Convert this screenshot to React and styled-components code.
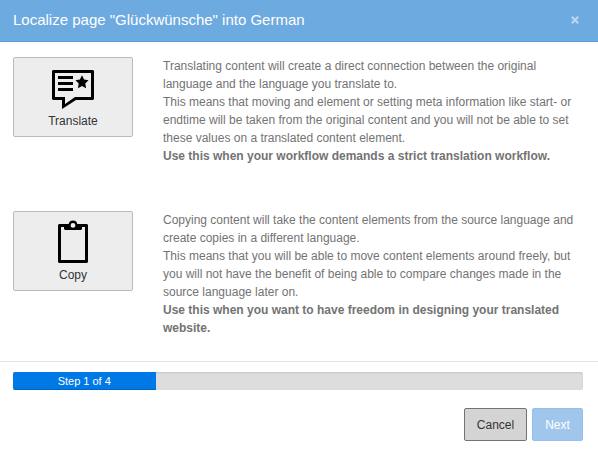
import React from "react";
import styled, { createGlobalStyle } from "styled-components";

const GlobalStyle = createGlobalStyle`
  *, *::before, *::after { box-sizing: border-box; }
  body {
    margin: 0;
    background: #fff;
    font-family: "Liberation Sans", Arial, sans-serif;
    font-size: 12px;
    line-height: 18px;
    color: #737373;
  }
`;

const Modal = styled.div`
  display: flex;
  flex-direction: column;
  width: 598px;
  height: 450px;
  overflow: hidden;
`;

const Header = styled.header`
  display: flex;
  align-items: center;
  justify-content: space-between;
  height: 42px;
  padding: 0 18px 2px 13px;
  background: #6daae0;
  border-bottom: 1px solid #5a9fd9;
`;

const Title = styled.h4`
  margin: 0;
  font-size: 15px;
  font-weight: 400;
  line-height: 20px;
  color: #fff;
`;

const CloseButton = styled.button`
  display: flex;
  padding: 0;
  border: 0;
  background: none;
  color: #b9d6f0;
`;

const Body = styled.main`
  display: grid;
  grid-auto-rows: 154px;
  height: 319px;
  padding: 15px 15px 0 13px;
`;

const Option = styled.section`
  display: grid;
  grid-template-columns: 120px 1fr;
  column-gap: 30px;
  align-items: start;
`;

const OptionButton = styled.button`
  display: flex;
  flex-direction: column;
  align-items: center;
  height: 80px;
  padding: 7px 0 0;
  border: 1px solid #bbb;
  border-radius: 2px;
  background: #ededed;
  color: #333;
  font: inherit;
  line-height: 16px;
`;

const OptionIcon = styled.svg`
  display: block;
  width: 48px;
  height: 48px;
  color: #000;
`;

const Description = styled.p`
  margin: 0;
`;

const Footer = styled.footer`
  display: flex;
  flex-direction: column;
  gap: 18px;
  padding: 10px 15px 0 13px;
  border-top: 1px solid #e5e5e5;
`;

const Progress = styled.div`
  height: 18px;
  overflow: hidden;
  border-radius: 2px;
  background: #ddd;
  box-shadow: inset 0 1px 2px rgba(0, 0, 0, 0.1);
`;

const ProgressBar = styled.div`
  width: 25%;
  height: 18px;
  font-size: 11px;
  line-height: 18px;
  text-align: center;
  color: #fff;
  background: #0078e6;
  box-shadow: inset 0 -1px 0 rgba(0, 0, 0, 0.15);
`;

const Actions = styled.div`
  display: flex;
  justify-content: flex-end;
  gap: 5px;
`;

const ActionButton = styled.button`
  width: ${(p) => (p.$primary ? 51 : 63)}px;
  height: 33px;
  padding: 0;
  border: 1px solid ${(p) => (p.$primary ? "#91c1ed" : "#737373")};
  border-radius: 2px;
  background: ${(p) => (p.$primary ? "#a1c6ec" : "#d4d4d4")};
  color: ${(p) => (p.$primary ? "#fff" : "#333")};
  font: inherit;
`;

const TranslateIcon = () => (
  <OptionIcon viewBox="0 0 48 48" aria-hidden="true">
    <path
      fill="currentColor"
      fillRule="evenodd"
      d="M4 5h40l1 1v28l-1 1H27L13 44V35H4l-1-1V6zM6 8v24h10v7l10-7h16V8z"
    />
    <path fill="currentColor" d="M9 11h15v3H9zM9 17h15v3H9zM9 23h15v3H9z" />
    <path
      fill="currentColor"
      d="M33 10.3l2.1 4.2 4.4.7-3.2 3.3.8 4.8-4.1-2.2-4.1 2.2.8-4.8-3.2-3.3 4.4-.7z"
    />
  </OptionIcon>
);

const CopyIcon = () => (
  <OptionIcon viewBox="0 0 48 48" aria-hidden="true">
    <path
      fill="currentColor"
      fillRule="evenodd"
      d="M10 5h9.7a4.4 4.4 0 0 1 8.6 0H38l1 1v37l-1 1H10l-1-1V6zM12 8v33h24V8h-3v2l-1 1H16l-1-1V8zM24 4a2.4 2.4 0 1 0 0 4.8 2.4 2.4 0 0 0 0-4.8z"
    />
  </OptionIcon>
);

const CloseIcon = () => (
  <svg width="10" height="10" viewBox="0 0 10 10" aria-hidden="true">
    <path d="M1.8 1.8l6.4 6.4M8.2 1.8L1.8 8.2" stroke="currentColor" strokeWidth="2.2" />
  </svg>
);

export default function App() {
  return (
    <>
      <GlobalStyle />
      <Modal>
        <Header>
          <Title>Localize page "Glückwünsche" into German</Title>
          <CloseButton aria-label="Close">
            <CloseIcon />
          </CloseButton>
        </Header>
        <Body>
          <Option>
            <OptionButton>
              <TranslateIcon />
              Translate
            </OptionButton>
            <Description>
              Translating content will create a direct connection between the
              original language and the language you translate to.
              <br />
              This means that moving and element or setting meta information
              like start- or endtime will be taken from the original content and
              you will not be able to set these values on a translated content
              element.
              <br />
              <strong>
                Use this when your workflow demands a strict translation
                workflow.
              </strong>
            </Description>
          </Option>
          <Option>
            <OptionButton>
              <CopyIcon />
              Copy
            </OptionButton>
            <Description>
              Copying content will take the content elements from the source
              language and create copies in a different language.
              <br />
              This means that you will be able to move content elements around
              freely, but you will not have the benefit of being able to compare
              changes made in the source language later on.
              <br />
              <strong>
                Use this when you want to have freedom in designing your
                translated website.
              </strong>
            </Description>
          </Option>
        </Body>
        <Footer>
          <Progress>
            <ProgressBar>Step 1 of 4</ProgressBar>
          </Progress>
          <Actions>
            <ActionButton>Cancel</ActionButton>
            <ActionButton $primary>Next</ActionButton>
          </Actions>
        </Footer>
      </Modal>
    </>
  );
}
